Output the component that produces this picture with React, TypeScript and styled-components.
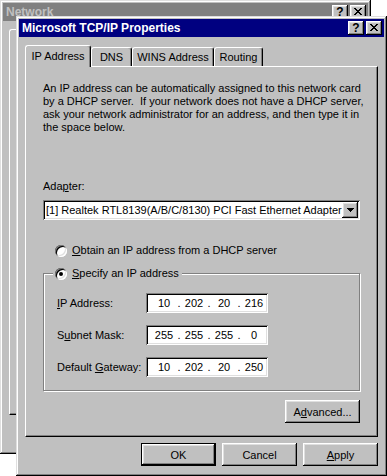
import React from 'react'
import styled, { createGlobalStyle, css } from 'styled-components'

const GlobalStyle = createGlobalStyle`
  html, body {
    margin: 0;
    padding: 0;
    background: #fff;
  }
  body {
    font-family: 'Liberation Sans', Arial, sans-serif;
    font-size: 11px;
    color: #000;
  }
  * {
    box-sizing: border-box;
  }
`

const raised = css`
  box-shadow: inset -1px -1px #000, inset 1px 1px #fff, inset -2px -2px #808080,
    inset 2px 2px #dfdfdf;
`
const sunken = css`
  box-shadow: inset 1px 1px #808080, inset -1px -1px #fff, inset 2px 2px #000,
    inset -2px -2px #dfdfdf;
`

const Desktop = styled.div`
  position: relative;
  width: 387px;
  height: 476px;
  overflow: hidden;
  background: #fff;
`

const Window = styled.div<{ $x: number; $y: number; $w: number; $h: number }>`
  position: absolute;
  left: ${p => p.$x}px;
  top: ${p => p.$y}px;
  width: ${p => p.$w}px;
  height: ${p => p.$h}px;
  isolation: isolate;
  padding: 3px;
  display: flex;
  flex-direction: column;
  background: #c0c0c0;
  box-shadow: inset -1px -1px #000, inset 1px 1px #dfdfdf, inset -2px -2px #808080,
    inset 2px 2px #fff;
`

const TitleBar = styled.div<{ $active?: boolean }>`
  flex: none;
  height: 18px;
  display: flex;
  align-items: center;
  padding: 0 2px 0 3px;
  background: ${p => (p.$active ? '#000080' : '#808080')};
  color: ${p => (p.$active ? '#fff' : '#c0c0c0')};
`

const TitleText = styled.span`
  flex: 1;
  font-weight: bold;
  font-size: 12px;
  white-space: nowrap;
  overflow: hidden;
`

const TitleButton = styled.div`
  width: 16px;
  height: 14px;
  display: flex;
  align-items: center;
  justify-content: center;
  background: #c0c0c0;
  color: #000;
  font-weight: bold;
  font-size: 12px;
  line-height: 14px;
  padding-bottom: 1px;
  ${raised};
  & + & {
    margin-left: 2px;
  }
`

const Body = styled.div`
  flex: 1;
  display: flex;
  flex-direction: column;
  padding: 8px 6px 7px;
`

const TabRow = styled.div`
  flex: none;
  height: 21px;
  display: flex;
  align-items: flex-end;
  position: relative;
  z-index: 1;
`

const Tab = styled.div<{ $w: number; $active?: boolean }>`
  width: ${p => p.$w}px;
  height: ${p => (p.$active ? 22 : 19)}px;
  margin-bottom: ${p => (p.$active ? -1 : 0)}px;
  display: flex;
  align-items: center;
  justify-content: center;
  padding-bottom: ${p => (p.$active ? 2 : 0)}px;
  white-space: nowrap;
  background: #c0c0c0;
  border: 1px solid;
  border-color: #fff #000 transparent #fff;
  border-bottom: 0;
  border-radius: 3px 3px 0 0;
  box-shadow: inset -1px 0 #808080;
`

const Panel = styled.div`
  flex: 1;
  display: flex;
  flex-direction: column;
  padding: 15px 17px 0;
  border: 1px solid;
  border-color: #fff #000 #000 #fff;
  box-shadow: inset -1px -1px #808080;
`

const Intro = styled.p`
  margin: 0;
  line-height: 13px;
  white-space: nowrap;
`

const FieldLabel = styled.div`
  margin-top: 46px;
  line-height: 13px;
`

const Combo = styled.div`
  margin-top: 7px;
  height: 20px;
  display: flex;
  align-items: center;
  padding: 2px 2px 2px 3px;
  background: #fff;
  ${sunken};
`

const ComboText = styled.span`
  flex: 1;
  white-space: nowrap;
  overflow: hidden;
`

const ComboButton = styled.div`
  width: 16px;
  height: 16px;
  display: flex;
  align-items: center;
  justify-content: center;
  background: #c0c0c0;
  ${raised};
`

const RadioRow = styled.label<{ $indent?: number }>`
  display: flex;
  align-items: center;
  gap: 5px;
  height: 13px;
  line-height: 13px;
  margin-left: ${p => p.$indent ?? 0}px;
  white-space: nowrap;
`

const Radio = styled.span<{ $checked?: boolean }>`
  position: relative;
  flex: none;
  width: 12px;
  height: 12px;
  border-radius: 50%;
  background: #fff;
  box-shadow: inset 1px 1px #808080, inset -1px -1px #fff, inset 2px 2px #000,
    inset -2px -2px #dfdfdf;
  &::after {
    content: '';
    display: ${p => (p.$checked ? 'block' : 'none')};
    position: absolute;
    left: 4px;
    top: 4px;
    width: 4px;
    height: 4px;
    border-radius: 50%;
    background: #000;
  }
`

const ObtainRow = styled.div`
  margin-top: 24px;
`

const Group = styled.fieldset`
  margin: 10px 0 0;
  min-width: 0;
  padding: 13px 13px 13px;
  border: 1px solid #808080;
  box-shadow: inset 1px 1px #fff, 1px 1px 0 #fff;
  display: flex;
  flex-direction: column;
  gap: 12px;
`

const Legend = styled.legend`
  margin-left: -4px;
  padding: 0 3px 0 2px;
  background: #c0c0c0;
  position: relative;
`

const AddrRow = styled.div`
  display: flex;
  align-items: center;
  height: 20px;
`

const AddrLabel = styled.span`
  width: 89px;
  white-space: nowrap;
`

const AddrField = styled.div`
  width: 122px;
  height: 20px;
  display: grid;
  grid-template-columns: 24px 6px 24px 6px 24px 6px 24px;
  align-items: center;
  padding-left: 6px;
  background: #fff;
  ${sunken};
`

const Octet = styled.span`
  text-align: center;
`

const Dot = styled.span`
  text-align: center;
`

const Button = styled.div<{ $default?: boolean }>`
  width: 75px;
  height: 23px;
  display: flex;
  align-items: center;
  justify-content: center;
  background: #c0c0c0;
  white-space: nowrap;
  ${p =>
    p.$default
      ? css`
          box-shadow: inset 0 0 0 1px #000, inset -2px -2px #000, inset 2px 2px #fff,
            inset -3px -3px #808080, inset 3px 3px #dfdfdf;
        `
      : raised};
`

const AdvancedButton = styled(Button)`
  align-self: flex-end;
  margin-top: 9px;
`

const ButtonRow = styled.div`
  flex: none;
  display: flex;
  justify-content: flex-end;
  gap: 6px;
  margin-top: 6px;
`

const U = styled.span`
  text-decoration: underline;
  text-underline-offset: 1px;
`

const CloseGlyph = () => (
  <svg width="8" height="7" viewBox="0 0 8 7" shapeRendering="crispEdges">
    <path
      d="M0 0h2v1h-2zM6 0h2v1h-2zM1 1h2v1h-2zM5 1h2v1h-2zM2 2h4v1h-4zM3 3h2v1h-2zM2 4h4v1h-4zM1 5h2v1h-2zM5 5h2v1h-2zM0 6h2v1h-2zM6 6h2v1h-2z"
      fill="#000"
    />
  </svg>
)

const DownArrow = () => (
  <svg width="7" height="4" viewBox="0 0 7 4" shapeRendering="crispEdges">
    <path d="M0 0h7v1h-7zM1 1h5v1h-5zM2 2h3v1h-3zM3 3h1v1h-1z" fill="#000" />
  </svg>
)

const Caption = ({ title, active }: { title: string; active?: boolean }) => (
  <TitleBar $active={active}>
    <TitleText>{title}</TitleText>
    <TitleButton>?</TitleButton>
    <TitleButton>
      <CloseGlyph />
    </TitleButton>
  </TitleBar>
)

const addresses = [
  { label: <><U>I</U>P Address:</>, value: ['10', '202', '20', '216'] },
  { label: <>S<U>u</U>bnet Mask:</>, value: ['255', '255', '255', '0'] },
  { label: <>Default <U>G</U>ateway:</>, value: ['10', '202', '20', '250'] },
]

const AddressInput = ({ value }: { value: string[] }) => (
  <AddrField>
    {value.map((v, i) => (
      <React.Fragment key={i}>
        {i > 0 && <Dot>.</Dot>}
        <Octet>{v}</Octet>
      </React.Fragment>
    ))}
  </AddrField>
)

const App = () => {
  return (
    <Desktop>
      <GlobalStyle />
      <Window $x={0} $y={0} $w={371} $h={454}>
        <Caption title="Network" />
        <Body>
          <TabRow>
            <Tab $w={82} $active>Configuration</Tab>
            <Tab $w={82}>Identification</Tab>
            <Tab $w={90}>Access Control</Tab>
          </TabRow>
          <Panel />
          <ButtonRow>
            <Button $default>OK</Button>
            <Button>Cancel</Button>
          </ButtonRow>
        </Body>
      </Window>

      <Window $x={16} $y={16} $w={371} $h={460}>
        <Caption title="Microsoft TCP/IP Properties" active />
        <Body>
          <TabRow>
            <Tab $w={66} $active>IP Address</Tab>
            <Tab $w={41}>DNS</Tab>
            <Tab $w={82}>WINS Address</Tab>
            <Tab $w={49}>Routing</Tab>
          </TabRow>
          <Panel>
            <Intro>
              An IP address can be automatically assigned to this network card
              <br />
              by a DHCP server.&nbsp; If your network does not have a DHCP server,
              <br />
              ask your network administrator for an address, and then type it in
              <br />
              the space below.
            </Intro>
            <FieldLabel>
              Ada<U>p</U>ter:
            </FieldLabel>
            <Combo>
              <ComboText>[1] Realtek RTL8139(A/B/C/8130) PCI Fast Ethernet Adapter</ComboText>
              <ComboButton>
                <DownArrow />
              </ComboButton>
            </Combo>
            <ObtainRow>
              <RadioRow $indent={12}>
                <Radio />
                <span>
                  <U>O</U>btain an IP address from a DHCP server
                </span>
              </RadioRow>
            </ObtainRow>
            <Group>
              <Legend>
                <RadioRow>
                  <Radio $checked />
                  <span>
                    <U>S</U>pecify an IP address
                  </span>
                </RadioRow>
              </Legend>
              {addresses.map((a, i) => (
                <AddrRow key={i}>
                  <AddrLabel>{a.label}</AddrLabel>
                  <AddressInput value={a.value} />
                </AddrRow>
              ))}
            </Group>
            <AdvancedButton>
              A<U>d</U>vanced...
            </AdvancedButton>
          </Panel>
          <ButtonRow>
            <Button $default>OK</Button>
            <Button>Cancel</Button>
            <Button>
              <U>A</U>pply
            </Button>
          </ButtonRow>
        </Body>
      </Window>
    </Desktop>
  )
}

export default App
